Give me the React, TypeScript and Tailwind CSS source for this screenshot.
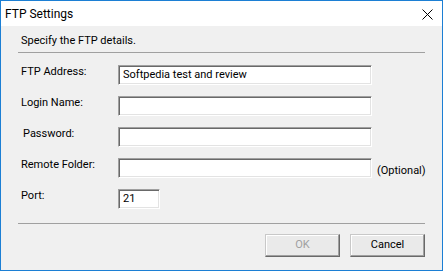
const font = { fontFamily: 'Roboto, "Noto Sans", sans-serif' }

const fieldCls =
  'shrink-0 h-[20px] bg-white border border-t-[#a0a0a0] border-l-[#a0a0a0] border-r-white border-b-white shadow-[inset_1px_1px_0_#696969,inset_-1px_-1px_0_#e3e3e3] flex items-center pl-[4px] text-[11px] text-black'

function Field({ label, value, width = 'w-[254px]', indent = false, note }: { label: string; value?: string; width?: string; indent?: boolean; note?: string }) {
  return (
    <div className="flex items-start h-[20px]">
      <div className={`shrink-0 w-[97px] leading-[16px] text-[11px] -mt-[1px] ${indent ? 'pl-[2px]' : ''}`}>{label}</div>
      <div className={`${fieldCls} ${width}`}>{value}</div>
      {note && <div className="ml-[5px] mt-[5px] leading-[16px] text-[11px] whitespace-nowrap">{note}</div>}
    </div>
  )
}

export default function App() {
  return (
    <div style={font} className="w-[443px] h-[271px] border border-[#1c7fd4] bg-[#f0f0f0] flex flex-col text-black">
      <div className="h-[25px] bg-white flex items-center justify-between pl-[4px] pr-[9px] shrink-0">
        <span className="text-[12px] leading-[16px]">FTP Settings</span>
        <svg width="11" height="11" viewBox="0 0 11 11" className="mt-[1px]">
          <path d="M0.5 0.5 L10.5 10.5 M10.5 0.5 L0.5 10.5" stroke="#000" strokeWidth="1" />
        </svg>
      </div>
      <div className="flex-1 px-[17px]">
        <div className="mt-[7px] pl-[3px] text-[11px] leading-[16px]">Specify the FTP details.</div>
        <div className="mt-[3px] h-px bg-[#a0a0a0]" />
        <div className="mt-[12px] pl-[3px] flex flex-col gap-[11px]">
          <Field label="FTP Address:" value="Softpedia test and review" />
          <Field label="Login Name:" />
          <Field label="Password:" indent />
          <Field label="Remote Folder:" note="(Optional)" />
          <Field label="Port:" value="21" width="w-[42px]" />
        </div>
        <div className="mt-[14px] h-px bg-[#a0a0a0]" />
        <div className="mt-[10px] flex justify-end gap-[10px]">
          <button className="w-[75px] h-[23px] text-[11px] text-[#a0a0a0] bg-[#eaeaea] border border-t-[#c8c8c8] border-l-[#c8c8c8] border-r-[#696969] border-b-[#696969] shadow-[inset_-1px_-1px_0_#a0a0a0,inset_1px_1px_0_#ffffff]">
            OK
          </button>
          <button className="w-[75px] h-[23px] text-[11px] text-black bg-[#eaeaea] border border-t-[#c8c8c8] border-l-[#c8c8c8] border-r-[#696969] border-b-[#696969] shadow-[inset_-1px_-1px_0_#a0a0a0,inset_1px_1px_0_#ffffff]">
            Cancel
          </button>
        </div>
      </div>
    </div>
  )
}
